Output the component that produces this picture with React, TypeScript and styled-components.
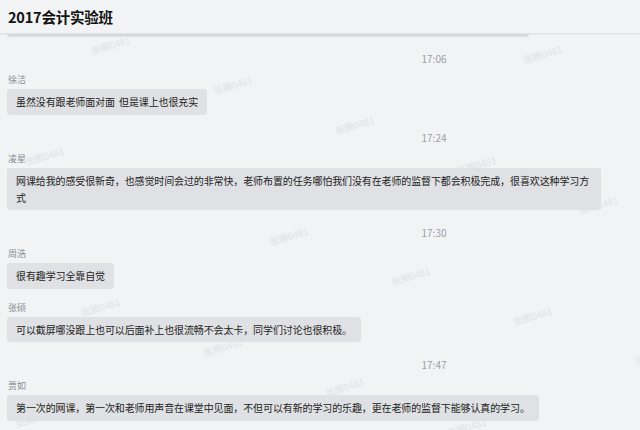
import React from "react";
import styled, { createGlobalStyle } from "styled-components";

const GlobalStyle = createGlobalStyle`
  html, body {
    margin: 0;
    padding: 0;
    background: #f2f3f5;
  }
  body {
    font-family: "Noto Sans CJK SC", "Noto Sans", sans-serif;
  }
`;

interface Item {
  time?: string;
  name: string;
  text: string;
}

const items: Item[] = [
  { time: "17:06", name: "徐洁", text: "虽然没有跟老师面对面  但是课上也很充实" },
  {
    time: "17:24",
    name: "凌星",
    text: "网课给我的感受很新奇，也感觉时间会过的非常快，老师布置的任务哪怕我们没有在老师的监督下都会积极完成，很喜欢这种学习方式",
  },
  { time: "17:30", name: "周浩", text: "很有趣学习全靠自觉" },
  { name: "张硕", text: "可以截屏哪没跟上也可以后面补上也很流畅不会太卡，同学们讨论也很积极。" },
  {
    time: "17:47",
    name: "贾如",
    text: "第一次的网课，第一次和老师用声音在课堂中见面，不但可以有新的学习的乐趣，更在老师的监督下能够认真的学习。",
  },
];

const Screen = styled.div`
  position: relative;
  width: 640px;
  height: 430px;
  overflow: hidden;
  background: #f2f3f5;
`;

const Header = styled.div`
  position: relative;
  z-index: 3;
  height: 33px;
  display: flex;
  align-items: center;
  padding: 0 8px;
  background: #f2f3f5;
  border-bottom: 1px solid #e2e4e7;
  box-shadow: 0 1px 1px rgba(0, 0, 0, 0.03);
`;

const Title = styled.h1`
  margin: 0;
  font-size: 14.5px;
  font-weight: 700;
  color: #111;
  letter-spacing: -0.2px;
`;

const Marks = styled.svg`
  position: absolute;
  left: 0;
  top: 0;
  z-index: 0;
  pointer-events: none;
`;

const Pane = styled.div`
  position: relative;
  z-index: 1;
  width: 868px;
  display: flex;
  flex-direction: column;
  align-items: flex-start;
  padding: 0 7px;
  box-sizing: border-box;
`;

const Stub = styled.div`
  width: 522px;
  height: 3px;
  background: #dcdde0;
  border-radius: 0 0 3px 3px;
  margin-bottom: 11px;
`;

const Time = styled.div`
  align-self: stretch;
  text-align: center;
  font-size: 10px;
  line-height: 14px;
  color: #9aa0aa;
  margin: 4px 0 7px;
`;

const Message = styled.div`
  display: flex;
  flex-direction: column;
  align-items: flex-start;
  margin-bottom: 12px;
`;

const Name = styled.div`
  font-size: 9px;
  line-height: 14px;
  color: #878c94;
  padding-left: 1px;
  margin-bottom: 2px;
`;

const Bubble = styled.div`
  max-width: 576px;
  padding: 4.25px 9px;
  background: #e0e1e4;
  border-radius: 3px;
  font-size: 10px;
  line-height: 17px;
  letter-spacing: -0.12px;
  color: #222;
  white-space: pre-wrap;
`;

function Watermarks() {
  const marks: { x: number; y: number }[] = [];
  for (let m = -6; m < 12; m++) {
    for (let n = -4; n < 8; n++) {
      const x = 111 + 122 * m - 66 * n;
      const y = 46 + 40 * m + 111 * n;
      if (x > -60 && x < 700 && y > -20 && y < 470) marks.push({ x, y });
    }
  }
  return (
    <Marks width="640" height="430" viewBox="0 0 640 430">
      {marks.map((p, i) => (
        <text
          key={i}
          x={p.x}
          y={p.y + 3}
          textAnchor="middle"
          fontSize="9.5"
          fill="#e0e2e5"
          fontFamily='"Noto Sans CJK SC", sans-serif'
          transform={`rotate(-16 ${p.x} ${p.y})`}
        >
          张腾0481
        </text>
      ))}
    </Marks>
  );
}

export default function App() {
  return (
    <Screen>
      <GlobalStyle />
      <Watermarks />
      <Header>
        <Title>2017会计实验班</Title>
      </Header>
      <Pane>
        <Stub />
        {items.map((it, i) => (
          <React.Fragment key={i}>
            {it.time && <Time>{it.time}</Time>}
            <Message>
              <Name>{it.name}</Name>
              <Bubble>{it.text}</Bubble>
            </Message>
          </React.Fragment>
        ))}
      </Pane>
    </Screen>
  );
}
